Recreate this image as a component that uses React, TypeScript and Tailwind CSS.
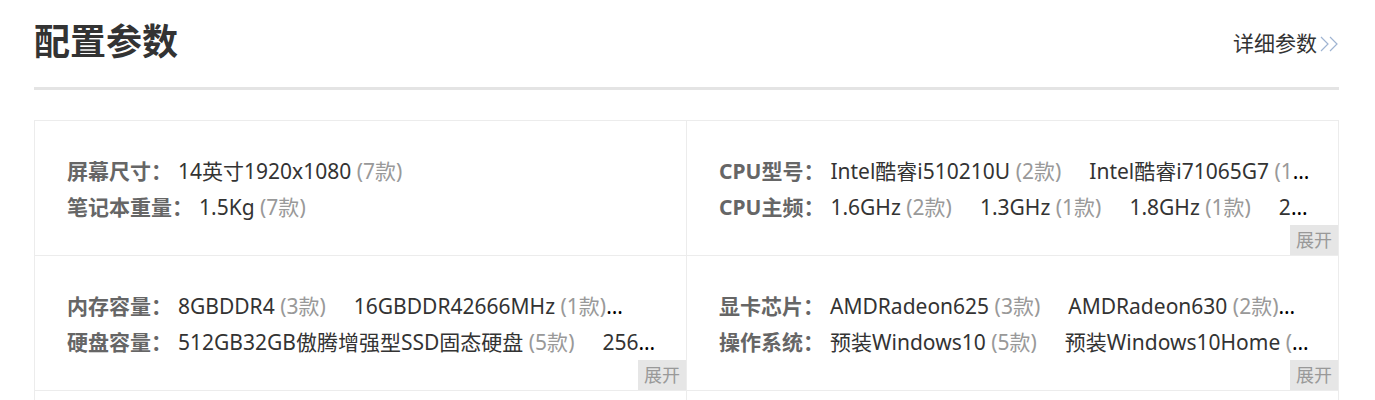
import React from "react"

type Item = [string, string]
type Row = { label: string; items: Item[] }
type Cell = { rows: Row[]; more: boolean }

const CELLS: Cell[] = [
  {
    rows: [
      { label: "屏幕尺寸：", items: [["14英寸1920x1080", "7款"]] },
      { label: "笔记本重量：", items: [["1.5Kg", "7款"]] },
    ],
    more: false,
  },
  {
    rows: [
      {
        label: "CPU型号：",
        items: [
          ["Intel酷睿i510210U", "2款"],
          ["Intel酷睿i71065G7", "1款"],
          ["AMD锐龙R53500U", "1款"],
        ],
      },
      {
        label: "CPU主频：",
        items: [
          ["1.6GHz", "2款"],
          ["1.3GHz", "1款"],
          ["1.8GHz", "1款"],
          ["2.1GHz", "1款"],
        ],
      },
    ],
    more: true,
  },
  {
    rows: [
      {
        label: "内存容量：",
        items: [
          ["8GBDDR4", "3款"],
          ["16GBDDR42666MHz", "1款"],
          ["8GBLPDDR3", "1款"],
        ],
      },
      {
        label: "硬盘容量：",
        items: [
          ["512GB32GB傲腾增强型SSD固态硬盘", "5款"],
          ["256GBSSD固态硬盘", "2款"],
        ],
      },
    ],
    more: true,
  },
  {
    rows: [
      {
        label: "显卡芯片：",
        items: [
          ["AMDRadeon625", "3款"],
          ["AMDRadeon630", "2款"],
          ["IntelUHDGraphics", "2款"],
        ],
      },
      {
        label: "操作系统：",
        items: [
          ["预装Windows10", "5款"],
          ["预装Windows10Home", "2款"],
        ],
      },
    ],
    more: true,
  },
  {
    rows: [
      { label: "电池类型：", items: [["3芯锂电池", "4款"]] },
      { label: "续航时间：", items: [["8小时", "3款"]] },
    ],
    more: false,
  },
  {
    rows: [
      { label: "产品定位：", items: [["轻薄笔记本", "7款"]] },
      { label: "上市时间：", items: [["2020年", "7款"]] },
    ],
    more: false,
  },
]

function Chevrons() {
  return (
    <svg width="20" height="16" viewBox="0 0 20 16" fill="none" className="ml-[2px]">
      <polyline points="2,1 9,8 2,15" stroke="#9fb4d2" strokeWidth="1.2" />
      <polyline points="11,1 18,8 11,15" stroke="#9fb4d2" strokeWidth="1.2" />
    </svg>
  )
}

function ParamCell({ cell }: { cell: Cell }) {
  return (
    <div className="relative border-r border-b border-[#ececec] pl-8 pr-7 pt-8 pb-[30px]">
      {cell.rows.map((row) => (
        <div
          key={row.label}
          className="h-9 leading-9 overflow-hidden whitespace-nowrap text-ellipsis text-[21px]"
        >
          <span className="font-bold text-[#666] mr-[6px]">{row.label}</span>
          {row.items.map(([value, count], i) => (
            <span key={value} className={i < row.items.length - 1 ? "mr-7" : ""}>
              <span className="text-[#333]">{value}</span>{" "}
              <span className="text-[#999]">({count})</span>
            </span>
          ))}
        </div>
      ))}
      {cell.more && (
        <div className="absolute right-0 bottom-0 w-12 h-[30px] bg-[#e6e6e6] text-[#999] text-[18px] leading-[30px] text-center">
          展开
        </div>
      )}
    </div>
  )
}

export default function App() {
  return (
    <div
      className="h-[400px] overflow-hidden bg-white pl-[34px]"
      style={{ fontFamily: '"Noto Sans", "Noto Sans CJK SC", sans-serif' }}
    >
      <div className="w-[1305px]">
        {/* Header */}
        <div className="flex h-[90px] items-center justify-between border-b-[3px] border-[#e4e4e4] pb-1">
          <h2 className="text-[36px] font-bold text-[#333]">配置参数</h2>
          <a className="flex items-center text-[21px] text-[#333] mt-1">
            详细参数
            <Chevrons />
          </a>
        </div>

        {/* Grid */}
        <div className="mt-[30px] grid grid-cols-2 border-l border-t border-[#ececec]">
          {CELLS.map((cell, i) => (
            <ParamCell key={i} cell={cell} />
          ))}
        </div>
      </div>
    </div>
  )
}
